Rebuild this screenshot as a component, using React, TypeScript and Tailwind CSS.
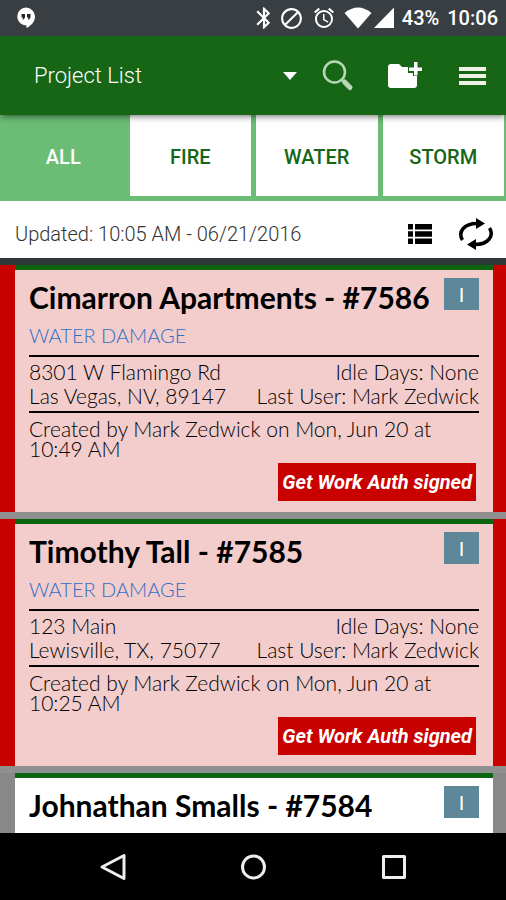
import { MdAlarm, MdBlock, MdBluetooth } from 'react-icons/md'

const tabs = ['ALL', 'FIRE', 'WATER', 'STORM']

type Project = {
  name: string
  alert: boolean
  details?: {
    type: string
    street: string
    city: string
    idle: string
    user: string
    created: string
    action: string
  }
}

const projects: Project[] = [
  {
    name: 'Cimarron Apartments - #7586',
    alert: true,
    details: {
      type: 'WATER DAMAGE',
      street: '8301 W Flamingo Rd',
      city: 'Las Vegas, NV, 89147',
      idle: 'Idle Days: None',
      user: 'Last User: Mark Zedwick',
      created: 'Created by Mark Zedwick on Mon, Jun 20 at 10:49 AM',
      action: 'Get Work Auth signed',
    },
  },
  {
    name: 'Timothy Tall - #7585',
    alert: true,
    details: {
      type: 'WATER DAMAGE',
      street: '123 Main',
      city: 'Lewisville, TX, 75077',
      idle: 'Idle Days: None',
      user: 'Last User: Mark Zedwick',
      created: 'Created by Mark Zedwick on Mon, Jun 20 at 10:25 AM',
      action: 'Get Work Auth signed',
    },
  },
  { name: 'Johnathan Smalls - #7584', alert: false },
]

function StatusBar() {
  return (
    <div className="flex h-9 shrink-0 items-center bg-[#393e42] pl-4 pr-2 text-white">
      <svg width="20" height="22" viewBox="0 0 20 22">
        <path d="M10 .5a9 9 0 0 1 9 9c0 5-4 9.500-8.500 11.500V18.500A9 9 0 1 1 10 .5z" fill="#fff" />
        <path d="M5.500 7h3.500v3.500L7.500 12.500H6.500L7 10.500H5.500zM11 7h3.500v3.500L13 12.500H12l.5-2H11z" fill="#222" />
      </svg>
      <div className="ml-auto flex items-center">
        <MdBluetooth size={26} />
        <MdBlock size={25} className="ml-0.5" />
        <MdAlarm size={24} className="ml-2" />
        <svg width="28" height="22" viewBox="0 0 28 22" className="ml-2">
          <path d="M.5 6Q14-5 27.500 6L14 21.500z" fill="#fff" />
        </svg>
        <svg width="20" height="22" viewBox="0 0 20 22" className="ml-0.5">
          <path d="M20 .5V21H0z" fill="#fff" />
        </svg>
        <span className="ml-2 text-xl font-medium">43%</span>
        <span className="ml-2 text-xl font-medium">10:06</span>
      </div>
    </div>
  )
}

function Header() {
  return (
    <header className="z-10 flex h-[79px] shrink-0 items-center bg-[#166616] pl-[34px] pr-5 text-white shadow-md shadow-black/30">
      <button className="flex flex-1 items-center justify-between text-[22px] font-light">
        Project List
        <svg width="14" height="8" viewBox="0 0 14 8">
          <path d="M0 0h14L7 8z" fill="#fff" />
        </svg>
      </button>
      <button aria-label="Search" className="ml-6">
        <svg width="34" height="34" viewBox="0 0 34 34" fill="none" stroke="#b9d6b9">
          <circle cx="13.500" cy="13" r="10.500" strokeWidth="2.500" />
          <path d="M20.500 20.500l3 3" strokeWidth="2" />
          <path d="M23.500 23l5.500 5.500" strokeWidth="5" strokeLinecap="round" />
        </svg>
      </button>
      <button aria-label="New folder" className="ml-8">
        <svg width="36" height="28" viewBox="0 0 36 28">
          <path d="M4 2h8l3 3h15v18a3 3 0 0 1-3 3H4a3 3 0 0 1-3-3V5a3 3 0 0 1 3-3z" fill="#fff" />
          <path d="M26 0h6v5h4v6h-4v3h-6v-3h-5V5h5z" fill="#166616" />
          <path d="M27 0h3.500v5.500H35V9h-4.500v4.500H27V9h-5V5.500h5z" fill="#fff" />
        </svg>
      </button>
      <button aria-label="Menu" className="ml-9">
        <svg width="27" height="20" viewBox="0 0 27 20" fill="#eef0e6">
          <path d="M0 1h27v4H0zM0 8h27v4H0zM0 15h27v4H0z" />
        </svg>
      </button>
    </header>
  )
}

function Tabs() {
  return (
    <nav className="grid h-[86px] shrink-0 grid-cols-4 bg-[#6bbc74] pb-[5px] text-xl font-medium">
      {tabs.map((tab, i) => (
        <button
          key={tab}
          className={i === 0 ? 'pt-0.5 text-white' : 'ml-[3px] mr-0.5 bg-white pt-0.5 text-[#166616]'}
        >
          {tab}
        </button>
      ))}
    </nav>
  )
}

function UpdatedBar() {
  return (
    <div className="flex h-[57px] shrink-0 items-center bg-white pl-[15px] pr-3 pt-2">
      <p className="text-xl font-light text-[#333]">Updated: 10:05 AM - 06/21/2016</p>
      <button aria-label="List view" className="ml-auto">
        <svg width="24" height="20" viewBox="0 0 24 20">
          <path d="M0 0h5v5.500H0zM7 0h17v5.500H7zM0 7.250h5v5.500H0zM7 7.250h17v5.500H7zM0 14.500h5V20H0zM7 14.500h17V20H7z" />
        </svg>
      </button>
      <button aria-label="Refresh" className="ml-[26px]">
        <svg width="36" height="34" viewBox="0 0 36 34">
          <g fill="none" stroke="#000" strokeWidth="3.500">
            <path d="M4.500 23C-.5 15 6 6.500 19 6.500" />
            <path d="M31.500 11C36.500 19 30 27.500 17 27.500" />
          </g>
          <path d="M18 1l9 5.500-9 5.500zM18 22l-9 5.500 9 5.500z" />
        </svg>
      </button>
    </div>
  )
}

function ProjectCard({ project }: { project: Project }) {
  const { name, alert, details } = project
  return (
    <li className={`pl-[15px] pr-[13px] ${alert ? 'h-[247px] shrink-0 bg-[#c90000]' : 'flex-1 bg-[#888]'}`}>
      <article
        className={`h-full border-t-[5px] border-[#0b640f] px-[14px] pt-2 ${alert ? 'bg-[#f3cccc]' : 'bg-white'}`}
      >
        <div className="flex items-start justify-between">
          <h2 className="whitespace-nowrap text-[30px] font-bold leading-[38px] text-black">{name}</h2>
          <button className="h-8 w-[35px] shrink-0 bg-[#5e8799] text-xl text-white">I</button>
        </div>
        {details && (
          <>
            <p className="mt-[3px] text-xl font-light leading-8 text-[#2f6fc4]">{details.type}</p>
            <div className="mt-1 flex justify-between border-y-2 border-black py-[3px] text-[21px] font-light leading-6">
              <p>
                {details.street}
                <br />
                {details.city}
              </p>
              <p className="text-right">
                {details.idle}
                <br />
                {details.user}
              </p>
            </div>
            <p className="mt-1.5 pr-8 text-[21px] font-light leading-5">{details.created}</p>
            <button className="ml-auto mr-[3px] mt-1 block h-[38px] bg-[#c90000] px-1 font-[Roboto] text-xl font-bold italic text-white">
              {details.action}
            </button>
          </>
        )}
      </article>
    </li>
  )
}

function NavBar() {
  return (
    <div className="flex h-[67px] shrink-0 items-center justify-center gap-28 bg-black">
      <button aria-label="Back">
        <svg width="28" height="28" viewBox="0 0 28 28" fill="none" stroke="#eee" strokeWidth="3" strokeLinejoin="round">
          <path d="M25 2.500v23L3 14z" />
        </svg>
      </button>
      <button aria-label="Home">
        <svg width="28" height="28" viewBox="0 0 28 28" fill="none" stroke="#eee" strokeWidth="3">
          <circle cx="14.500" cy="14" r="11" />
        </svg>
      </button>
      <button aria-label="Recent apps">
        <svg width="28" height="28" viewBox="0 0 28 28" fill="none" stroke="#eee" strokeWidth="3" strokeLinejoin="round">
          <path d="M4.500 3.500h21v21h-21z" />
        </svg>
      </button>
    </div>
  )
}

export default function App() {
  return (
    <div className="flex h-screen flex-col bg-black font-[Roboto,sans-serif]">
      <StatusBar />
      <Header />
      <Tabs />
      <UpdatedBar />
      <main className="flex min-h-0 flex-1 flex-col border-t-[7px] border-[#30383a] bg-[#909090]">
        <ul className="flex flex-1 flex-col gap-[7px] overflow-hidden font-[Lato,sans-serif]">
          {projects.map((p) => (
            <ProjectCard key={p.name} project={p} />
          ))}
        </ul>
      </main>
      <NavBar />
    </div>
  )
}
